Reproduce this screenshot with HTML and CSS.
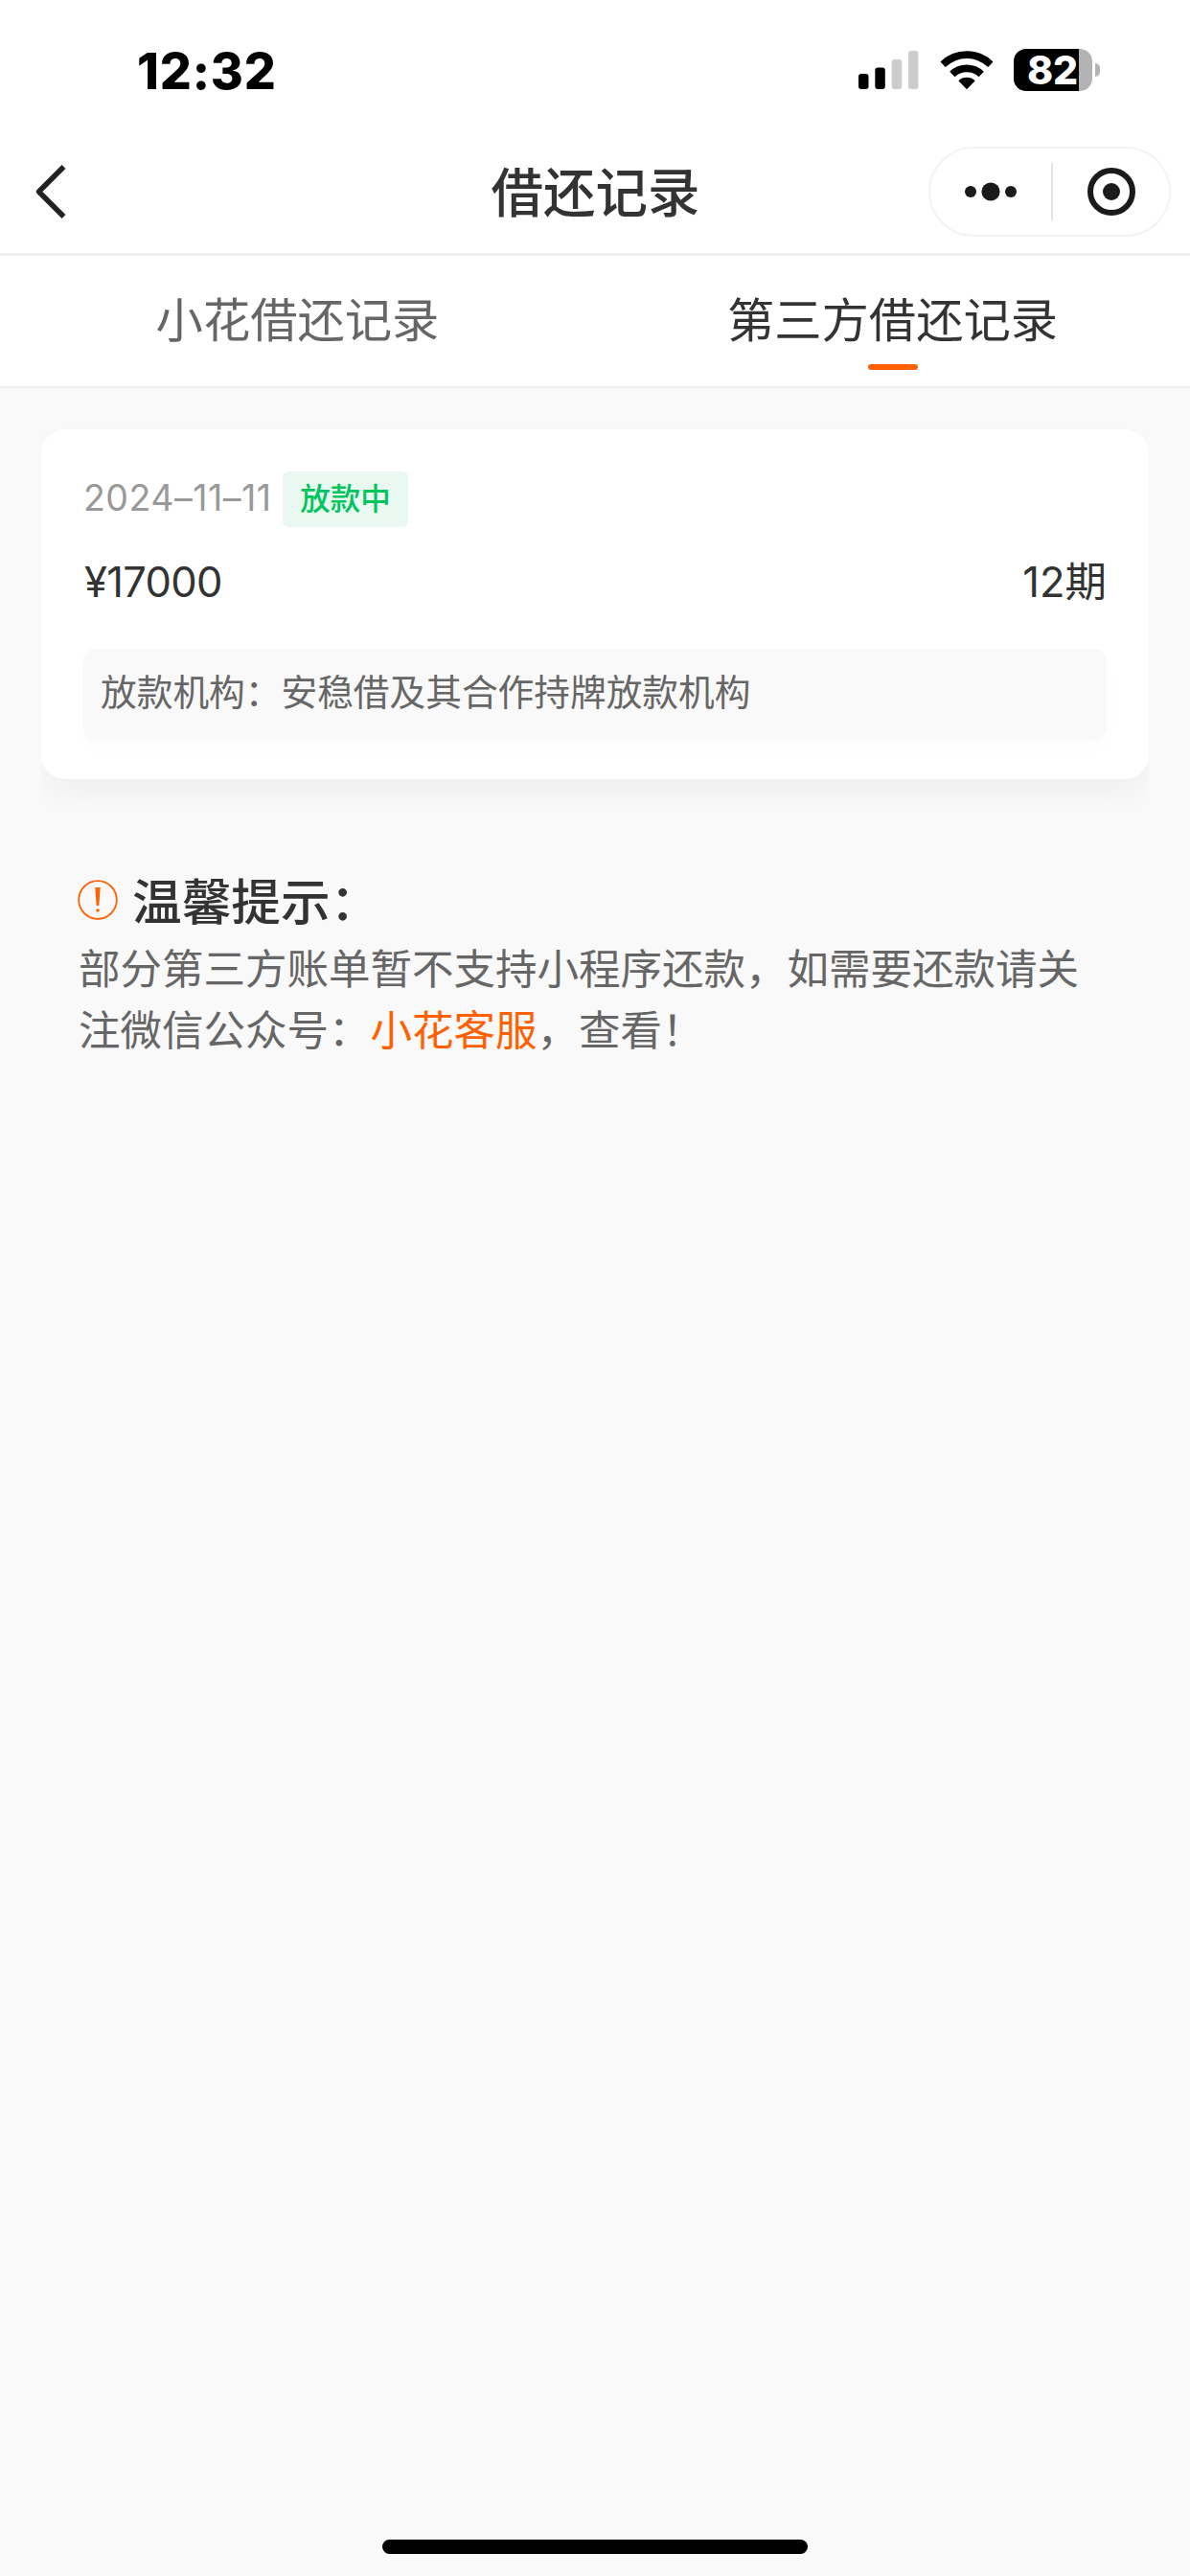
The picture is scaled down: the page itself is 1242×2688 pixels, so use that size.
FILE: index.html
```
<!DOCTYPE html>
<html lang="zh-CN">
<head>
    <meta charset="UTF-8">
    <meta name="viewport" content="width=device-width, initial-scale=1.0">
    <title>借还记录</title>
    <link rel="stylesheet" href="styles.css">
</head>
<body>

<div class="page">
    <!-- 状态栏 -->
    <div class="status-bar">
        <span class="time">12:32</span>
        <div class="status-icons">
            <svg class="signal" width="64" height="40" viewBox="0 0 64 40">
                <rect x="0" y="24" width="10.5" height="16" rx="3"/>
                <rect x="17.3" y="17.5" width="10.5" height="22.5" rx="3"/>
                <rect x="34.7" y="9" width="10.5" height="31" rx="3" fill="#ccc"/>
                <rect x="52" y="0" width="10.5" height="40" rx="3" fill="#ccc"/>
            </svg>
            <svg class="wifi" width="56" height="42" viewBox="0 0 56 42">
                <path d="M0.5 12.5a39 39 0 0 1 55 0l-5.2 5.6a32 32 0 0 0-44.6 0z"/>
                <path d="M10.2 22.7a25.4 25.4 0 0 1 35.6 0l-5.3 5.5a18 18 0 0 0-25 0z"/>
                <path d="M19.3 32.3a12.6 12.6 0 0 1 17.4 0L28 41.2z"/>
            </svg>
            <div class="battery">
                <div class="battery-body"><span>82</span></div>
                <div class="battery-cap"></div>
            </div>
        </div>
    </div>

    <!-- 导航栏 -->
    <div class="nav-bar">
        <svg class="back" width="34" height="56" viewBox="0 0 34 56">
            <path d="M30.5 2L4.5 28l26 26" fill="none" stroke="#222" stroke-width="5.4" stroke-linejoin="round"/>
        </svg>
        <h1 class="nav-title">借还记录</h1>
        <div class="capsule">
            <svg width="56" height="22" viewBox="0 0 56 22">
                <circle cx="7" cy="11" r="6"/>
                <circle cx="28" cy="11" r="9.6"/>
                <circle cx="49" cy="11" r="6"/>
            </svg>
            <i class="capsule-line"></i>
            <svg width="52" height="52" viewBox="0 0 52 52">
                <circle cx="26" cy="26" r="22" fill="none" stroke="#1a1a1a" stroke-width="6"/>
                <circle cx="26" cy="26" r="9"/>
            </svg>
        </div>
    </div>

    <div class="tabs">
        <div class="tab">小花借还记录</div>
        <div class="tab active">第三方借还记录</div>
    </div>

    <div class="list">
        <div class="card">
            <div class="card-head">
                <span class="date">2024–11–11</span>
                <span class="badge">放款中</span>
            </div>
            <div class="card-amount">
                <span class="amount">¥17000</span>
                <span>12期</span>
            </div>
            <div class="org">放款机构：安稳借及其合作持牌放款机构</div>
        </div>
    </div>

    <div class="tips">
        <div class="tips-title">
            <svg width="42" height="42" viewBox="0 0 42 42">
                <circle cx="21" cy="21" r="19.8" fill="none" stroke="#ff6000" stroke-width="1.8"/>
                <path d="M18.3 8h5.4l-1.4 19h-2.6z" fill="#ff6000"/>
                <circle cx="21" cy="32" r="1.8" fill="#ff6000"/>
            </svg>
            <span>温馨提示：</span>
        </div>
        <p class="tips-text">部分第三方账单暂不支持小程序还款，如需要还款请关注微信公众号：<span class="link">小花客服</span>，查看！</p>
    </div>

    <div class="home-indicator"></div>
</div>

</body>
</html>
```
FILE: styles.css
```
* { box-sizing: border-box; }

html, body {
    margin: 0;
    padding: 0;
    background: #f9f9f9;
    font-family: 'Inter', 'Noto Sans CJK SC', sans-serif;
    color: #333;
}

.page {
    display: flex;
    flex-direction: column;
    width: 1242px;
    height: 2688px;
}

svg { display: block; flex: none; }

/* 状态栏 */
.status-bar {
    display: flex;
    justify-content: space-between;
    height: 134px;
    padding: 0 94px 0 143px;
    background: #fff;
    color: #000;
}
.time {
    margin-top: 44px;
    font-size: 52px;
    line-height: 62px;
    font-weight: 800;
    letter-spacing: 0.8px;
}
.status-icons { display: flex; align-items: flex-start; }
.signal { margin: 53px 21px 0 0; }
.wifi { margin: 52px 21px 0 0; }
.battery {
    display: flex;
    align-items: center;
    gap: 3px;
    margin-top: 51px;
}
.battery-body {
    width: 82px;
    height: 44px;
    padding-left: 14px;
    border-radius: 13px;
    background: linear-gradient(to right, #000 68px, #b3b3b3 68px);
    color: #fff;
    font-size: 41px;
    line-height: 44px;
    font-weight: 800;
    letter-spacing: -0.3px;
}
.battery-cap {
    width: 5px;
    height: 14px;
    border-radius: 0 5px 5px 0;
    background: #b3b3b3;
}

/* 导航栏 */
.nav-bar {
    display: grid;
    grid-template-columns: 1fr auto 1fr;
    align-items: center;
    height: 133px;
    padding: 2px 20px 0 36px;
    border-bottom: 3px solid #f0f0f0;
    background: #fff;
}
.nav-title {
    margin: 2px 0 0 -15px;
    font-size: 54.5px;
    line-height: 80px;
    font-weight: 500;
}
.capsule {
    display: flex;
    align-items: center;
    justify-self: end;
    width: 253px;
    height: 94px;
    padding: 0 34px 0 35px;
    justify-content: space-between;
    border: 2px solid #f3f3f3;
    border-radius: 47px;
    fill: #1a1a1a;
}
.capsule-line { width: 2px; height: 60px; background: #e5e5e5; }

.tabs {
    display: flex;
    height: 138px;
    border-bottom: 2px solid #efefef;
    background: #fff;
}
.tab {
    display: flex;
    flex: 1;
    flex-direction: column;
    align-items: center;
    padding-top: 30px;
    font-size: 49.3px;
    line-height: 74px;
    color: #666;
}
.tab.active { color: #333; }
.tab.active::after {
    content: '';
    width: 52px;
    height: 6px;
    margin-top: 9px;
    border-radius: 3px;
    background: #ff6000;
}

/* 借还记录卡片 */
.list {
    margin: 0 43px;
    padding: 43px 0 50px;
    overflow: hidden;
}
.card {
    height: 365px;
    padding: 44px 44px 0;
    border-radius: 25px;
    background: #fff;
    box-shadow: 0 16px 32px rgba(0, 0, 0, 0.04);
}
.card-head { display: flex; align-items: center; height: 58px; }
.date {
    width: 208px;
    margin-top: -3px;
    font-size: 37.5px;
    line-height: 46px;
    font-weight: 400;
    letter-spacing: 0.5px;
    white-space: nowrap;
    color: #999;
}
.badge {
    width: 131px;
    height: 58px;
    border-radius: 6px;
    background: #eaf8f2;
    color: #00c55c;
    font-size: 31.5px;
    line-height: 58px;
    font-weight: 500;
    text-align: center;
}
.card-amount {
    display: flex;
    justify-content: space-between;
    margin: 26px 0 0 1px;
    font-size: 43.5px;
    line-height: 62px;
}
.amount { letter-spacing: -0.7px; }
.org {
    height: 94px;
    margin-top: 39px;
    padding-left: 18px;
    border-radius: 12px;
    background: #f9f9f9;
    box-shadow: 0 10px 20px rgba(0, 0, 0, 0.015);
    color: #666;
    font-size: 37.7px;
    line-height: 91px;
}

.tips { padding: 38px 81px 0; }
.tips-title {
    display: flex;
    align-items: center;
    gap: 15px;
    height: 76px;
    margin-bottom: 2px;
    font-size: 51.7px;
    line-height: 76px;
    font-weight: 500;
}
.tips-title span { margin-top: 3px; }
.tips-text {
    margin: 0;
    padding-left: 1px;
    font-size: 43.5px;
    line-height: 64px;
    color: #666;
}
.link { color: #ff6000; }

.home-indicator {
    width: 444px;
    height: 15px;
    margin: auto auto 23px;
    border-radius: 8px;
    background: #000;
}
```
